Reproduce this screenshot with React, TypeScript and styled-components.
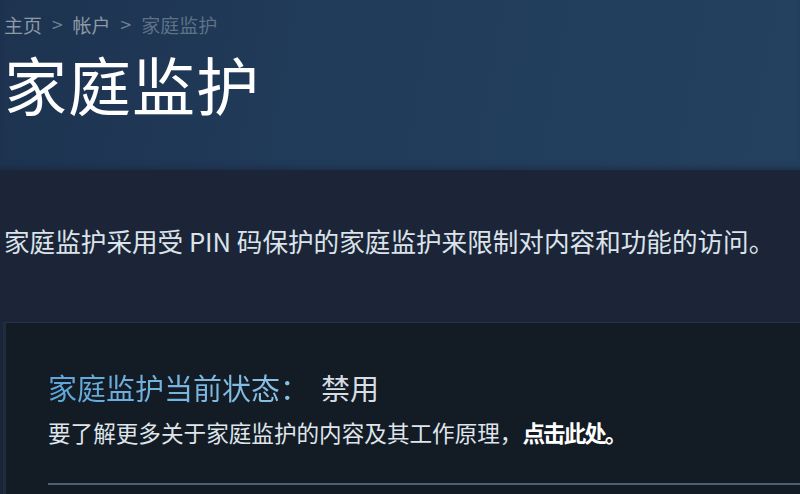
import styled, { createGlobalStyle } from "styled-components";

const GlobalStyle = createGlobalStyle`
  html, body {
    margin: 0;
    padding: 0;
    background: #1b2537;
    font-family: "Noto Sans CJK SC", "Noto Sans", sans-serif;
  }
`;

const Page = styled.div`
  width: 800px;
  height: 494px;
  overflow: hidden;
  background: #1b2537;
  display: flex;
  flex-direction: column;
`;

const Hero = styled.header`
  height: 170px;
  flex-shrink: 0;
  box-sizing: border-box;
  padding: 12px 0 0 4px;
  background: linear-gradient(100deg, #1d3350 0%, #213c5b 45%, #24415f 100%);
  box-shadow: inset 0 -6px 6px -4px rgba(27, 37, 55, 0.6);
`;

const Crumbs = styled.nav`
  display: flex;
  align-items: center;
  gap: 9px;
  font-size: 19px;
  line-height: 26px;
  color: #8a98a6;
`;

const Crumb = styled.span<{ $current?: boolean }>`
  color: ${p => (p.$current ? "#5c7285" : "#8d99a5")};
`;

const Sep = styled.span`
  color: #6d8296;
  font-family: "DejaVu Sans", sans-serif;
  font-size: 15px;
`;

const Title = styled.h1`
  margin: 9px 0 0;
  font-size: 63px;
  line-height: 72px;
  font-weight: 400;
  color: #ffffff;
  letter-spacing: 1px;
`;

const Intro = styled.p`
  margin: 54px 0 0 4px;
  font-size: 25.6px;
  line-height: 34px;
  color: #dce3ea;
`;

const Panel = styled.section`
  flex: 1;
  margin: 64px 0 0 3px;
  padding: 46px 0 0 42px;
  background: #131b25;
  border-top: 1px solid #273548;
  border-left: 3px solid #1f2c3d;
`;

const StatusRow = styled.div`
  display: flex;
  align-items: baseline;
  font-size: 29px;
  line-height: 36px;
`;

const StatusLabel = styled.span`
  background: linear-gradient(90deg, #5ea6d9, #8fc4e6);
  -webkit-background-clip: text;
  background-clip: text;
  color: transparent;
`;

const StatusValue = styled.span`
  margin-left: 12px;
  color: #d6dde4;
`;

const Help = styled.p`
  margin: 13px 0 0;
  font-size: 22.6px;
  line-height: 30px;
  color: #dfe5ea;
`;

const HelpLink = styled.a`
  color: #ffffff;
  font-weight: 700;
  letter-spacing: -2px;
  text-decoration: none;
`;

const Rule = styled.hr`
  margin: 35px 0 0;
  border: none;
  height: 2px;
  background: #4b6274;
`;

export default function App() {
  return (
    <>
      <GlobalStyle />
      <Page>
        <Hero>
          <Crumbs>
            <Crumb>主页</Crumb>
            <Sep>&gt;</Sep>
            <Crumb>帐户</Crumb>
            <Sep>&gt;</Sep>
            <Crumb $current>家庭监护</Crumb>
          </Crumbs>
          <Title>家庭监护</Title>
        </Hero>
        <Intro>家庭监护采用受 PIN 码保护的家庭监护来限制对内容和功能的访问。</Intro>
        <Panel>
          <StatusRow>
            <StatusLabel>家庭监护当前状态：</StatusLabel>
            <StatusValue>禁用</StatusValue>
          </StatusRow>
          <Help>
            要了解更多关于家庭监护的内容及其工作原理，<HelpLink href="#">点击此处。</HelpLink>
          </Help>
          <Rule />
        </Panel>
      </Page>
    </>
  );
}
